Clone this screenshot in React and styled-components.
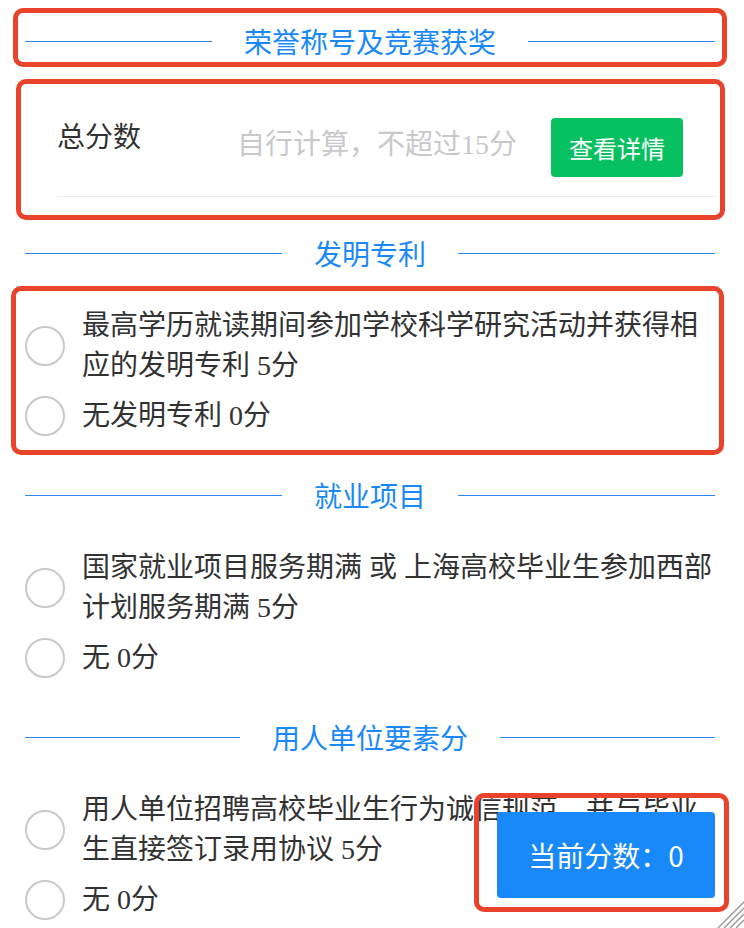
import React from "react";
import styled, { createGlobalStyle } from "styled-components";

const GlobalStyle = createGlobalStyle`
  html, body {
    margin: 0;
    padding: 0;
    background: #fff;
    overflow: hidden;
  }
  body {
    font-family: "Liberation Serif", "Noto Sans CJK SC", serif;
    color: #333;
  }
`;

const Page = styled.div`
  box-sizing: border-box;
  width: 744px;
  height: 928px;
  padding: 20px 29px 0 25px;
`;

// red annotation frame: grows outward by the given extents without moving content
const Highlight = styled.div`
  border: 5px solid #e9432b;
  border-radius: 10px;
  margin: ${(p) => `-${p.$t}px -${p.$r}px -${p.$b}px -${p.$l}px`};
  padding: ${(p) => `${p.$t - 5}px ${p.$r - 5}px ${p.$b - 5}px ${p.$l - 5}px`};
`;

const SectionTitle = styled.div`
  display: flex;
  align-items: center;
  height: 42px;
  color: #1989fa;
  font-size: 28px;
  font-family: "Noto Sans CJK SC", sans-serif;

  &::before,
  &::after {
    content: "";
    flex: 1;
    height: 1px;
    background: #2b88ee;
  }

  span {
    padding: 0 32px;
    line-height: 42px;
  }
`;

const ScoreArea = styled.div`
  padding: 22px 0 17px;
`;

const ScoreBlock = styled.div`
  padding: 34px 0 18px 32px;
`;

const ScoreRow = styled.div`
  display: flex;
  align-items: flex-start;
  padding: 0 32px 19px 0;
  border-bottom: 1px solid #ebedf0;
`;

const FieldLabel = styled.div`
  width: 180px;
  font-size: 28px;
  line-height: 40px;
  color: #323233;
`;

const Placeholder = styled.div`
  flex: 1;
  font-size: 28px;
  line-height: 54px;
  color: #c8c9cc;
`;

const DetailButton = styled.button`
  width: 132px;
  height: 59px;
  padding: 0;
  border: none;
  border-radius: 4px;
  background: #07c160;
  color: #fff;
  font-size: 24px;
  font-family: "Noto Sans CJK SC", sans-serif;
`;

const OptionList = styled.div`
  padding: 32px 0 38px;
`;

const OptionGroup = styled.div`
  display: flex;
  flex-direction: column;
  gap: 10px;
`;

const Option = styled.label`
  display: flex;
  align-items: center;
`;

const Radio = styled.span`
  flex: none;
  box-sizing: border-box;
  width: 40px;
  height: 40px;
  margin-right: 17px;
  border: 2px solid #c8c9cc;
  border-radius: 50%;
`;

const OptionText = styled.span`
  font-size: 28px;
  line-height: 40px;
  color: #323233;
`;

const ScoreDock = styled.div`
  position: fixed;
  right: 29px;
  bottom: 30px;
`;

const ScoreButton = styled.button`
  display: block;
  width: 218px;
  height: 86px;
  padding: 0;
  border: none;
  border-radius: 4px;
  background: #1989fa;
  color: #fff;
  font-size: 28px;
  font-family: "Noto Sans CJK SC", sans-serif;
`;

const ResizeGrip = styled.svg`
  position: fixed;
  right: 0;
  bottom: 0;
`;

const sections = [
  {
    title: "发明专利",
    framed: true,
    options: ["最高学历就读期间参加学校科学研究活动并获得相应的发明专利 5分", "无发明专利 0分"],
  },
  {
    title: "就业项目",
    options: ["国家就业项目服务期满 或 上海高校毕业生参加西部计划服务期满 5分", "无 0分"],
  },
  {
    title: "用人单位要素分",
    options: ["用人单位招聘高校毕业生行为诚信规范，并与毕业生直接签订录用协议 5分", "无 0分"],
  },
];

const Options = ({ items }) => (
  <OptionGroup>
    {items.map((text) => (
      <Option key={text}>
        <Radio />
        <OptionText>{text}</OptionText>
      </Option>
    ))}
  </OptionGroup>
);

export default function App() {
  return (
    <Page>
      <GlobalStyle />
      <Highlight $t={12} $r={12} $b={5} $l={12}>
        <SectionTitle><span>荣誉称号及竞赛获奖</span></SectionTitle>
      </Highlight>

      <ScoreArea>
        <Highlight $t={5} $r={10} $b={5} $l={9}>
          <ScoreBlock>
            <ScoreRow>
              <FieldLabel>总分数</FieldLabel>
              <Placeholder>自行计算，不超过15分</Placeholder>
              <DetailButton>查看详情</DetailButton>
            </ScoreRow>
          </ScoreBlock>
        </Highlight>
      </ScoreArea>

      {sections.map((s) => (
        <React.Fragment key={s.title}>
          <SectionTitle><span>{s.title}</span></SectionTitle>
          <OptionList>
            {s.framed ? (
              <Highlight $t={20} $r={9} $b={19} $l={14}>
                <Options items={s.options} />
              </Highlight>
            ) : (
              <Options items={s.options} />
            )}
          </OptionList>
        </React.Fragment>
      ))}

      <ScoreDock>
        <Highlight $t={19} $r={14} $b={14} $l={23}>
          <ScoreButton>当前分数：0</ScoreButton>
        </Highlight>
      </ScoreDock>

      <ResizeGrip width="28" height="28" viewBox="0 0 28 28">
        <g stroke="#9a9a9a" strokeWidth="1.5">
          <line x1="2" y1="28" x2="28" y2="2" />
          <line x1="8" y1="28" x2="28" y2="8" />
          <line x1="14" y1="28" x2="28" y2="14" />
          <line x1="20" y1="28" x2="28" y2="20" />
        </g>
      </ResizeGrip>
    </Page>
  );
}
